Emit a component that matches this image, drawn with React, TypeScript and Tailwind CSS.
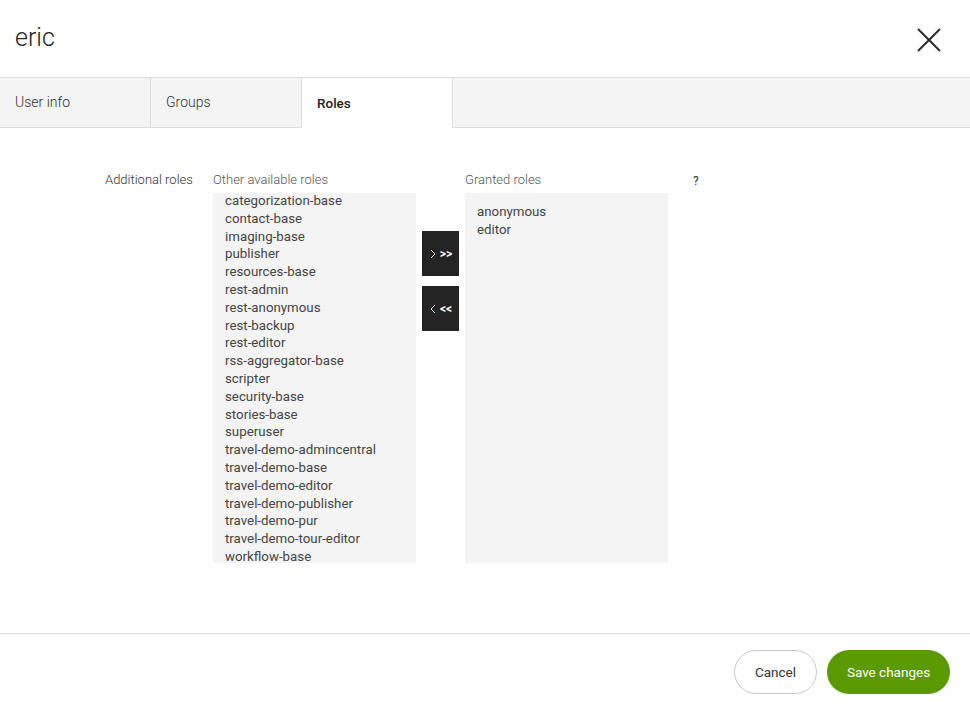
import React from "react";

const available = [
  "categorization-base",
  "contact-base",
  "imaging-base",
  "publisher",
  "resources-base",
  "rest-admin",
  "rest-anonymous",
  "rest-backup",
  "rest-editor",
  "rss-aggregator-base",
  "scripter",
  "security-base",
  "stories-base",
  "superuser",
  "travel-demo-admincentral",
  "travel-demo-base",
  "travel-demo-editor",
  "travel-demo-publisher",
  "travel-demo-pur",
  "travel-demo-tour-editor",
  "workflow-base",
];

const granted = ["anonymous", "editor"];

function Chevron({ dir }: { dir: "right" | "left" }) {
  return (
    <svg width="6" height="10" viewBox="0 0 6 10" fill="none" stroke="white" strokeWidth="0.9">
      {dir === "right" ? <path d="M1 1 L5 5 L1 9" /> : <path d="M5 1 L1 5 L5 9" />}
    </svg>
  );
}

export default function App() {
  return (
    <div
      className="w-[970px] h-[709px] bg-white flex flex-col text-[#333] overflow-hidden"
      style={{ fontFamily: "Roboto, 'Liberation Sans', sans-serif" }}
    >
      {/* Header */}
      <div className="h-[77px] flex items-center justify-between pl-[15px] pr-[28px] shrink-0">
        <div className="text-[25px] font-light text-[#222] leading-none -mt-[2px]">eric</div>
        <svg width="26" height="26" viewBox="0 0 26 26" className="mt-[2px]">
          <path d="M2 2 L24 24 M24 2 L2 24" stroke="#2a2a2a" strokeWidth="2" />
        </svg>
      </div>

      {/* Tabs */}
      <div className="flex h-[51px] border-t border-[#dcdcdc] shrink-0 bg-[#f4f4f4]">
        <div className="w-[151px] border-r border-b border-[#dcdcdc] flex items-center pl-[15px] text-[14px] font-light text-[#333]">
          User info
        </div>
        <div className="w-[151px] border-r border-b border-[#dcdcdc] flex items-center pl-[15px] text-[14px] font-light text-[#333]">
          Groups
        </div>
        <div className="w-[151px] border-r border-[#dcdcdc] bg-white flex items-center pl-[15px] text-[13.5px] font-medium text-[#222]">
          Roles
        </div>
        <div className="flex-1 border-b border-[#dcdcdc]" />
      </div>

      {/* Content */}
      <div className="flex-1 flex items-start pt-[44px] pl-[105px]">
        <div className="w-[108px] text-[13px] font-light text-[#333] leading-[15px]">Additional roles</div>
        <div className="w-[203px] flex flex-col">
          <div className="text-[13px] font-light text-[#555] leading-[15px] mb-[6px]">Other available roles</div>
          <div className="h-[370px] bg-[#f4f4f4] overflow-hidden pl-[12px]">
            <div className="-mt-[1px]">
              {available.map((r) => (
                <div key={r} className="text-[13.3px] leading-[17.8px] text-[#444] whitespace-nowrap">
                  {r}
                </div>
              ))}
            </div>
          </div>
        </div>
        <div className="w-[37px] mx-[6px] flex flex-col gap-[10px] pt-[59px]">
          <div className="h-[45px] bg-[#242424] flex items-center justify-center gap-[4px] pl-[1px]">
            <Chevron dir="right" />
            <span className="text-white text-[12px] font-semibold leading-none">&gt;&gt;</span>
          </div>
          <div className="h-[45px] bg-[#242424] flex items-center justify-center gap-[4px] pl-[1px]">
            <Chevron dir="left" />
            <span className="text-white text-[12px] font-semibold leading-none">&lt;&lt;</span>
          </div>
        </div>
        <div className="w-[203px] flex flex-col">
          <div className="text-[13px] font-light text-[#555] leading-[15px] mb-[6px]">Granted roles</div>
          <div className="h-[370px] bg-[#f4f4f4] overflow-hidden pl-[12px] pt-[10px]">
            {granted.map((r) => (
              <div key={r} className="text-[13.3px] leading-[17.8px] text-[#444] whitespace-nowrap">
                {r}
              </div>
            ))}
          </div>
        </div>
        <div className="ml-[25px] mt-[2px] text-[12px] text-[#333] leading-[15px]">?</div>
      </div>

      {/* Footer */}
      <div className="h-[76px] border-t border-[#dcdcdc] flex items-center justify-end gap-[10px] pr-[20px] shrink-0">
        <button className="h-[44px] w-[83px] rounded-full border border-[#c8c8c8] bg-white text-[13.5px] text-[#333] pt-[1px]">
          Cancel
        </button>
        <button className="h-[44px] w-[123px] rounded-full bg-[#5a9a00] text-[13.5px] text-white pt-[1px]">
          Save changes
        </button>
      </div>
    </div>
  );
}
